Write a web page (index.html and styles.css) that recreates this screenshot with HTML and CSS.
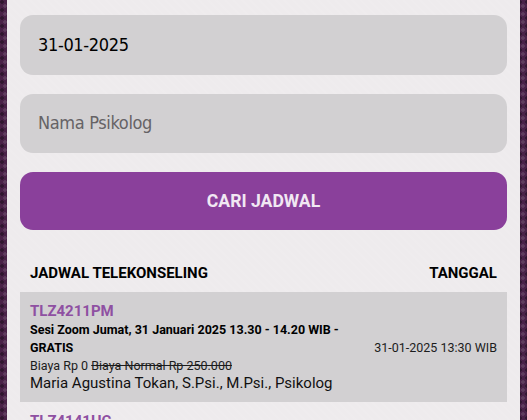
FILE: index.html
```html
<!DOCTYPE html>
<html lang="id">
<head>
<meta charset="utf-8">
<title>Jadwal Telekonseling</title>
<link rel="stylesheet" href="styles.css">
</head>
<body>
<main class="panel">
  <form class="search">
    <div class="field field-value">31-01-2025</div>
    <div class="field field-placeholder">Nama Psikolog</div>
    <button class="submit" type="button">CARI JADWAL</button>
  </form>
  <section class="schedule">
    <div class="head">
      <span>JADWAL TELEKONSELING</span>
      <span>TANGGAL</span>
    </div>
    <article class="row row-shaded">
      <div class="info">
        <div class="code">TLZ4211PM</div>
        <div class="title">Sesi Zoom Jumat, 31 Januari 2025 13.30 - 14.20 WIB - GRATIS</div>
        <div class="fee">Biaya Rp 0 <s>Biaya Normal Rp 250.000</s></div>
        <div class="person">Maria Agustina Tokan, S.Psi., M.Psi., Psikolog</div>
      </div>
      <div class="when">31-01-2025 13:30 WIB</div>
    </article>
    <article class="row">
      <div class="info">
        <div class="code">TLZ4141HC</div>
      </div>
    </article>
  </section>
</main>
</body>
</html>
```
FILE: styles.css
```css
html, body {
  margin: 0;
  height: 420px;
  overflow: hidden;
}
body {
  width: 527px;
  background-color: #4a2348;
  background-image:
    radial-gradient(circle at 2px 2px, rgba(0,0,0,.35) 0 1.5px, transparent 2px),
    radial-gradient(circle at 5px 6px, rgba(255,255,255,.12) 0 1.5px, transparent 2px);
  background-size: 7px 8px;
  font-family: Roboto, "Liberation Sans", sans-serif;
  color: #000;
}
.panel {
  box-sizing: border-box;
  margin: 0 7px;
  width: 513px;
  height: 420px;
  padding: 15px 13px 0;
  background-color: #eeebed;
  background-image:
    repeating-linear-gradient(45deg, rgba(255,255,255,.05) 0 2px, transparent 2px 6px);
  overflow: hidden;
}
.search {
  display: flex;
  flex-direction: column;
  gap: 19px;
}
.field {
  box-sizing: border-box;
  height: 60px;
  padding: 0 18px 2px;
  display: flex;
  align-items: center;
  background: #d2d0d2;
  border-radius: 13px;
  font-family: "DejaVu Sans", sans-serif;
  font-stretch: condensed;
  font-size: 18px;
  letter-spacing: -0.35px;
}
.field-placeholder {
  height: 59px;
  color: #666366;
}
.submit {
  height: 58px;
  border: 0;
  border-radius: 13px;
  background: #8a409b;
  color: #f1e8f3;
  font-family: Roboto, sans-serif;
  font-weight: 700;
  font-size: 17.6px;
}
.schedule {
  margin-top: 33px;
}
.head {
  display: flex;
  justify-content: space-between;
  padding: 0 10px;
  height: 29px;
  font-weight: 700;
  font-size: 15px;
  line-height: 20px;
}
.row {
  display: flex;
  align-items: center;
  justify-content: space-between;
  gap: 20px;
  padding: 10px 10px 10px;
}
.row-shaded {
  background: #d2d0d2;
}
.info {
  flex: 1;
  min-width: 0;
}
.code {
  font-size: 15px;
  font-weight: 700;
  line-height: 18px;
  color: #8f50a2;
}
.title {
  margin-top: 1px;
  font-size: 12.5px;
  font-weight: 700;
  line-height: 18px;
}
.fee {
  font-size: 12.5px;
  line-height: 18px;
  color: #1c1c1c;
}
.person {
  margin-top: -1px;
  font-size: 15px;
  line-height: 18px;
  color: #111;
}
.when {
  flex: none;
  font-size: 12.5px;
  color: #1c1c1c;
}
```
